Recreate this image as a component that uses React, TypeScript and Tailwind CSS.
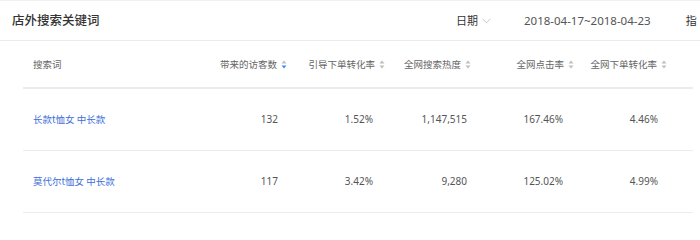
import React from 'react'

type Row = {
  keyword: string
  visitors: string
  conv: string
  heat: string
  ctr: string
  netConv: string
}

const rows: Row[] = [
  { keyword: '长款t恤女 中长款', visitors: '132', conv: '1.52%', heat: '1,147,515', ctr: '167.46%', netConv: '4.46%' },
  { keyword: '莫代尔t恤女 中长款', visitors: '117', conv: '3.42%', heat: '9,280', ctr: '125.02%', netConv: '4.99%' },
]

const columns = ['带来的访客数', '引导下单转化率', '全网搜索热度', '全网点击率', '全网下单转化率']

function SortIcon({ active }: { active?: boolean }) {
  return (
    <svg width="6" height="9" viewBox="0 0 6 9" className="ml-[4px] shrink-0">
      <polygon points="3,0.5 5.5,3.5 0.5,3.5" fill="#bfbfbf" />
      <polygon points="0.5,5.5 5.5,5.5 3,8.5" fill={active ? '#3b8ff0' : '#bfbfbf'} />
    </svg>
  )
}

const grid = 'grid grid-cols-[177px_90px_98px_86px_103px_93px_1fr]'

export default function App() {
  return (
    <div className="w-[700px] h-[240px] overflow-hidden bg-white border-t border-[#f0f0f0] font-['Noto_Sans_CJK_SC','Liberation_Sans',sans-serif]">
      <div className="h-[40px] flex items-center pl-3 border-b border-[#ececec] whitespace-nowrap">
        <div className="w-[444px] shrink-0 text-[12.5px] font-medium text-[#333]">店外搜索关键词</div>
        <div className="flex items-center shrink-0 text-[11px] text-[#333]">
          日期
          <svg width="9" height="6" viewBox="0 0 9 6" className="ml-[4px]">
            <polyline points="0.5,0.8 4.5,4.8 8.5,0.8" fill="none" stroke="#c8c8c8" strokeWidth="1" />
          </svg>
        </div>
        <div className="ml-[33px] shrink-0 text-[11.5px] text-[#555] font-['Noto_Sans','Liberation_Sans',sans-serif]">2018-04-17~2018-04-23</div>
        <div className="ml-[35px] shrink-0 text-[11px] text-[#333]">指</div>
      </div>

      <div className="ml-[23px] mr-[7px]">
        <div className={`${grid} h-[48px] border-b-2 border-[#ececec] text-[9.5px] text-[#666] items-center`}>
          <div className="pl-[10px]">搜索词</div>
          {columns.map((c, i) => (
            <div key={c} className="flex items-center justify-end pr-[3px]">
              {c}
              <SortIcon active={i === 0} />
            </div>
          ))}
          <div />
        </div>

        {rows.map((r) => (
          <div key={r.keyword} className={`${grid} h-[62px] border-b border-[#ececec] text-[10px] text-[#555] items-center font-['Noto_Sans','Noto_Sans_CJK_SC',sans-serif]`}>
            <div className="pl-[10px] text-[9.5px] text-[#3d6fd9] font-['Noto_Sans_CJK_SC',sans-serif]">{r.keyword}</div>
            <div className="text-right pr-[12px]">{r.visitors}</div>
            <div className="text-right pr-[15px]">{r.conv}</div>
            <div className="text-right pr-[7px]">{r.heat}</div>
            <div className="text-right pr-[14px]">{r.ctr}</div>
            <div className="text-right pr-[12px]">{r.netConv}</div>
            <div />
          </div>
        ))}
        <div className="h-[40px]" />
      </div>
    </div>
  )
}
